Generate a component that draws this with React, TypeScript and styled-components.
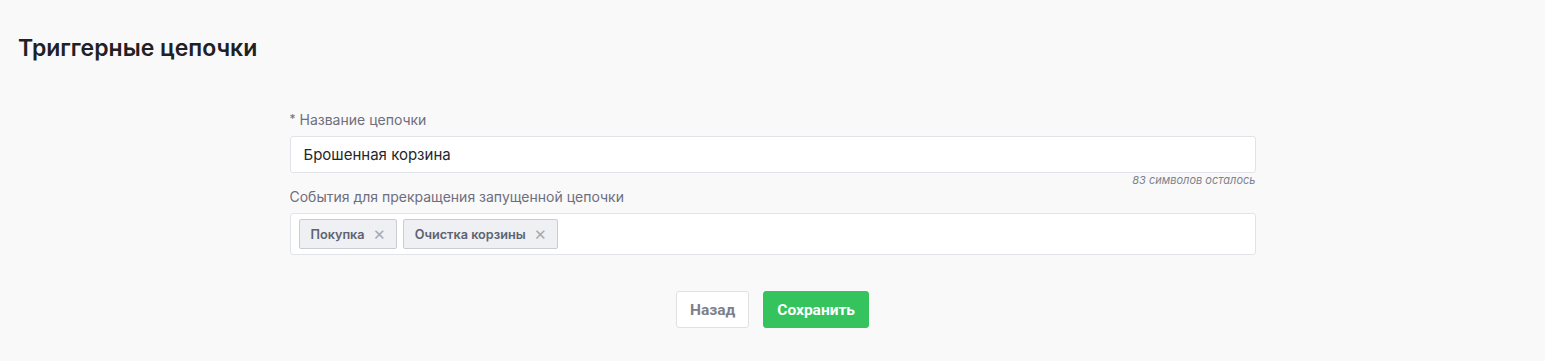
import React from "react";
import styled, { createGlobalStyle } from "styled-components";

const GlobalStyle = createGlobalStyle`
  html, body {
    margin: 0;
    padding: 0;
    background: #f9f9f9;
    font-family: Inter, "Noto Sans", sans-serif;
  }
  * {
    box-sizing: border-box;
  }
`;

const Page = styled.div`
  min-height: 361px;
  background: #f9f9f9;
  padding: 34px 18px 0;
`;

const Title = styled.h1`
  margin: 0;
  font-size: 23px;
  line-height: 28px;
  font-weight: 600;
  color: #1f2124;
`;

const Form = styled.div`
  width: 966px;
  margin: 49px auto 0;
  display: flex;
  flex-direction: column;
`;

const Label = styled.label`
  font-size: 14px;
  line-height: 18px;
  color: #6e6e7e;
  margin-bottom: 7px;

  sup {
    font-size: 12px;
    margin-right: 4px;
    vertical-align: 2px;
    line-height: 0;
  }
`;

const TextInput = styled.div`
  height: 37px;
  background: #fff;
  border: 1px solid #e2e3e8;
  border-radius: 3px;
  padding: 0 13px;
  display: flex;
  align-items: center;
  font-size: 15px;
  color: #25272b;
`;

const Counter = styled.div`
  text-align: right;
  font-size: 11px;
  line-height: 15px;
  font-style: italic;
  color: #80828c;
`;

const TagBox = styled.div`
  height: 42px;
  background: #fff;
  border: 1px solid #e2e3e8;
  border-radius: 3px;
  padding: 0 8px;
  display: flex;
  align-items: center;
  gap: 6px;
`;

const Tag = styled.span`
  height: 30px;
  display: inline-flex;
  align-items: center;
  gap: 8px;
  padding: 0 10px 0 11px;
  background: #eff0f3;
  border: 1px solid #c9cdd3;
  border-radius: 2px;
  font-size: 12.7px;
  font-weight: 600;
  color: #5d6370;
`;

const Close = styled.span`
  font-size: 15px;
  font-weight: 400;
  color: #a5a9b0;
  line-height: 1;
`;

const Actions = styled.div`
  display: flex;
  justify-content: center;
  gap: 14px;
  margin-top: 36px;
`;

const Button = styled.button<{ $primary?: boolean }>`
  height: 37px;
  padding: 0 13px;
  border-radius: 3px;
  font-family: Roboto, "Noto Sans", sans-serif;
  font-size: 15.5px;
  font-weight: 700;
  cursor: pointer;
  border: 1px solid ${(p) => (p.$primary ? "#34c35c" : "#e0e1e5")};
  background: ${(p) => (p.$primary ? "#34c35c" : "#fff")};
  color: ${(p) => (p.$primary ? "#fff" : "#7d8089")};
`;

const tags = ["Покупка", "Очистка корзины"];

export default function App() {
  return (
    <>
      <GlobalStyle />
      <Page>
        <Title>Триггерные цепочки</Title>
        <Form>
          <Label>
            <sup>*</sup>Название цепочки
          </Label>
          <TextInput>Брошенная корзина</TextInput>
          <Counter>83 символов осталось</Counter>
          <Label>События для прекращения запущенной цепочки</Label>
          <TagBox>
            {tags.map((t) => (
              <Tag key={t}>
                {t}
                <Close>✕</Close>
              </Tag>
            ))}
          </TagBox>
          <Actions>
            <Button>Назад</Button>
            <Button $primary>Сохранить</Button>
          </Actions>
        </Form>
      </Page>
    </>
  );
}
